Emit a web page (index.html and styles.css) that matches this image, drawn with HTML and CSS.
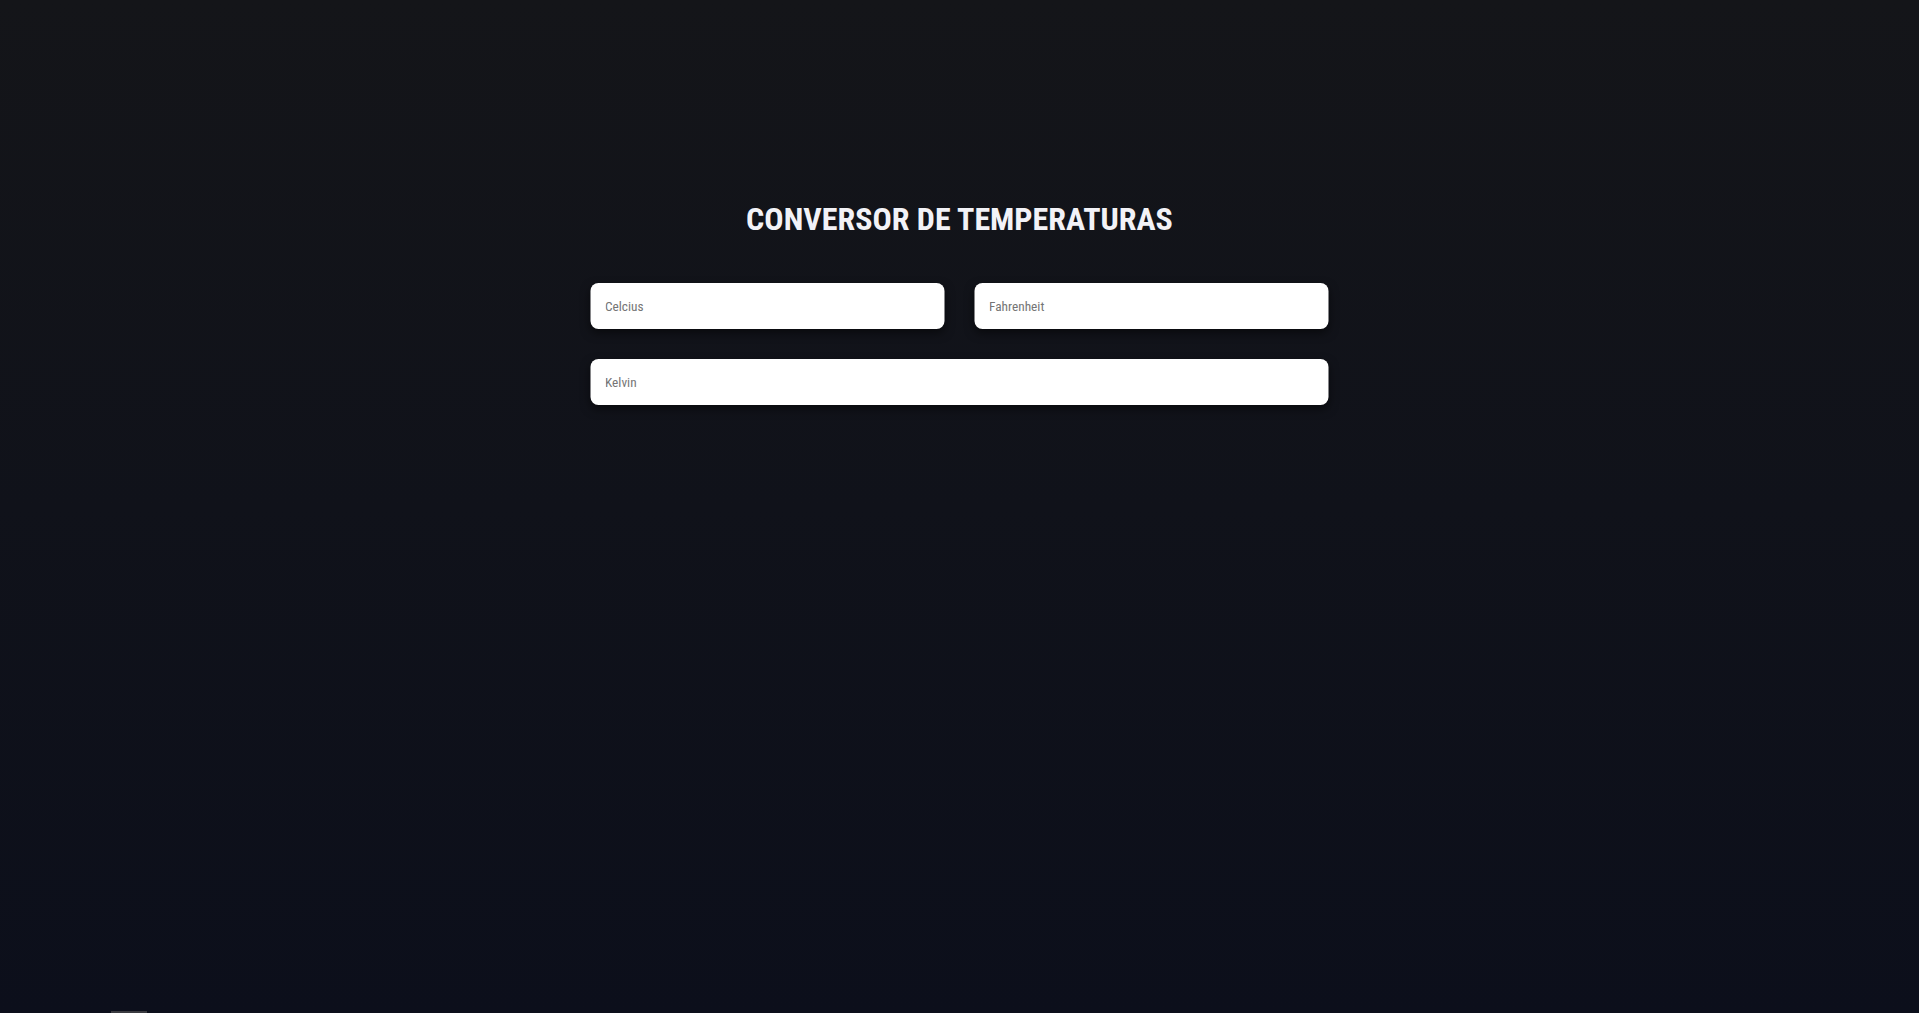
FILE: index.html
```html
<!DOCTYPE html>
<html lang="pt-BR">
<head>
<meta charset="utf-8">
<title>Conversor de Temperaturas</title>
<link rel="stylesheet" href="styles.css">
</head>
<body>
<main class="app">
  <h1 class="title">CONVERSOR DE TEMPERATURAS</h1>
  <div class="grid">
    <input class="field" type="text" placeholder="Celcius">
    <input class="field" type="text" placeholder="Fahrenheit">
    <input class="field wide" type="text" placeholder="Kelvin">
  </div>
</main>
<div class="thumb"></div>
</body>
</html>
```
FILE: styles.css
```css
html, body {
  margin: 0;
  height: 100%;
}
body {
  background: linear-gradient(180deg, #141519 0%, #0c0f1b 100%);
  font-family: "Roboto Condensed", "Roboto", "Liberation Sans", sans-serif;
  font-stretch: condensed;
  overflow: hidden;
}
.app {
  width: 738px;
  margin: 0 auto;
  padding-top: 197px;
  display: flex;
  flex-direction: column;
  align-items: center;
}
.title {
  margin: 0;
  color: #f2f2f7;
  font-size: 32px;
  font-weight: 700;
  line-height: 44px;
}
.grid {
  margin-top: 42px;
  width: 100%;
  display: grid;
  grid-template-columns: 1fr 1fr;
  gap: 30px;
  transform: translateX(-0.5px);
}
.field {
  box-sizing: border-box;
  height: 46px;
  border: none;
  border-radius: 8px;
  background: #ffffff;
  padding: 0 15px;
  font-family: "Roboto Condensed", "Roboto", "Liberation Sans", sans-serif;
  font-stretch: condensed;
  font-size: 13.3333px;
  box-shadow: 0 4px 10px rgba(0, 0, 0, 0.5);
  outline: none;
}
.field::placeholder {
  color: #757575;
}
.wide {
  grid-column: 1 / 3;
}
.thumb {
  position: fixed;
  left: 111px;
  bottom: 0;
  width: 36px;
  height: 2px;
  background: #3a3b40;
}
```
